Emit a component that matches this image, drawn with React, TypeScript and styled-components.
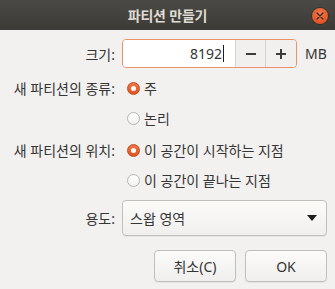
import styled, { createGlobalStyle } from 'styled-components';

const GlobalStyle = createGlobalStyle`
  html, body {
    margin: 0;
    padding: 0;
    background: #f2f1f0;
  }
  body {
    font-family: 'Noto Sans', 'Noto Sans CJK KR', sans-serif;
    font-size: 14px;
    color: #353535;
  }
`

type Option = { label: string; checked?: boolean };

const typeOptions: Option[] = [
  { label: '주', checked: true },
  { label: '논리' },
];

const placeOptions: Option[] = [
  { label: '이 공간이 시작하는 지점', checked: true },
  { label: '이 공간이 끝나는 지점' },
];

const App = () => {
  return (
    <Window>
      <GlobalStyle />
      <TitleBar>
        <Title>파티션 만들기</Title>
        <CloseButton aria-label='close'>
          <svg width='8' height='8' viewBox='0 0 8 8'>
            <path d='M1 1 L7 7 M7 1 L1 7' stroke='#3c2a22' strokeWidth='1.3' strokeLinecap='round' />
          </svg>
        </CloseButton>
      </TitleBar>

      <Form>
        <Label>크기:</Label>
        <SizeRow>
          <SpinEntry>
            <SpinValue>
              8192<Caret />
            </SpinValue>
            <SpinButton aria-label='minus'>
              <svg width='12' height='12' viewBox='0 0 12 12'>
                <path d='M1 6 H11' stroke='#3c3c3c' strokeWidth='2' />
              </svg>
            </SpinButton>
            <SpinButton aria-label='plus'>
              <svg width='12' height='12' viewBox='0 0 12 12'>
                <path d='M1 6 H11 M6 1 V11' stroke='#3c3c3c' strokeWidth='2' />
              </svg>
            </SpinButton>
          </SpinEntry>
          <Unit>MB</Unit>
        </SizeRow>

        <Label $gap={2}>새 파티션의 종류:</Label>
        <RadioItem option={typeOptions[0]} gap={2} />
        <span />
        <RadioItem option={typeOptions[1]} />

        <Label $gap={2}>새 파티션의 위치:</Label>
        <RadioItem option={placeOptions[0]} gap={2} />
        <span />
        <RadioItem option={placeOptions[1]} />

        <Label $gap={2}>용도:</Label>
        <Combo>
          <span>스왑 영역</span>
          <svg width='10' height='6' viewBox='0 0 10 6'>
            <path d='M0 0 H10 L5 6 Z' fill='#1e1e1e' />
          </svg>
        </Combo>
      </Form>

      <Footer>
        <Button>취소(C)</Button>
        <Button>OK</Button>
      </Footer>
    </Window>
  );
}

const RadioItem = ({ option, gap }: { option: Option; gap?: number }) => (
  <RadioRow $gap={gap}>
    <Radio $checked={option.checked} />
    <span>{option.label}</span>
  </RadioRow>
);

export default App;

const Window = styled.div`
  width: 335px;
  height: 289px;
  background: #f2f1f0;
  overflow: hidden;
`

const TitleBar = styled.div`
  height: 30px;
  position: relative;
  display: flex;
  align-items: center;
  justify-content: center;
  background: linear-gradient(#4b4a45, #3c3b37);
`

const Title = styled.div`
  color: #dfdbd2;
  font-weight: bold;
  font-size: 14px;
  letter-spacing: -0.2px;
`

const CloseButton = styled.div`
  position: absolute;
  right: 7px;
  top: 8px;
  width: 16px;
  height: 16px;
  border-radius: 50%;
  background: radial-gradient(circle at 50% 35%, #f27a4c, #e45526 70%, #c9461c);
  box-shadow: 0 0 0 1px rgba(0, 0, 0, 0.25);
  display: flex;
  align-items: center;
  justify-content: center;
`

const Form = styled.div`
  display: grid;
  grid-template-columns: 107px 1fr;
  column-gap: 7px;
  row-gap: 6px;
  padding: 9px 10px 0 8px;
  align-items: center;
`

const Label = styled.div<{ $gap?: number }>`
  text-align: right;
  white-space: nowrap;
  margin-top: ${p => p.$gap ?? 0}px;
`

const SizeRow = styled.div`
  display: flex;
  align-items: center;
  gap: 8px;
`

const SpinEntry = styled.div`
  width: 173px;
  height: 27px;
  display: flex;
  border: 1px solid #e9926c;
  border-radius: 4px;
  overflow: hidden;
  box-shadow: inset 0 0 0 1px rgba(233, 146, 108, 0.25);
`

const SpinValue = styled.div`
  flex: 1;
  display: flex;
  align-items: center;
  justify-content: flex-end;
  padding-right: 11px;
  background: #ffffff;
  font-size: 14px;
`

const Caret = styled.span`
  display: inline-block;
  width: 1px;
  height: 17px;
  background: #1e1e1e;
  margin-left: 1px;
`

const SpinButton = styled.div`
  width: 29px;
  display: flex;
  align-items: center;
  justify-content: center;
  background: #f1f0ee;
  border-left: 1px solid #d6d3cf;

  &:last-child {
    width: 30px;
  }
`

const Unit = styled.span`
  font-size: 14px;
`

const RadioRow = styled.div<{ $gap?: number }>`
  height: 24px;
  display: flex;
  align-items: center;
  gap: 4px;
  padding-left: 5px;
  margin-top: ${p => p.$gap ?? 0}px;
  white-space: nowrap;
`

const Radio = styled.span<{ $checked?: boolean }>`
  box-sizing: border-box;
  width: 13px;
  height: 13px;
  border-radius: 50%;
  flex-shrink: 0;
  position: relative;
  border: 1px solid ${p => (p.$checked ? '#c44a1d' : '#b8b5b0')};
  background: ${p => (p.$checked ? 'linear-gradient(#f07746, #e0521f)' : 'linear-gradient(#ffffff, #f3f2f1)')};

  &::after {
    content: '';
    display: ${p => (p.$checked ? 'block' : 'none')};
    position: absolute;
    left: 50%;
    top: 50%;
    width: 5px;
    height: 5px;
    margin: -2.5px 0 0 -2.5px;
    border-radius: 50%;
    background: #ffffff;
  }
`

const Combo = styled.div`
  box-sizing: border-box;
  height: 36px;
  margin-top: 2px;
  display: flex;
  align-items: center;
  justify-content: space-between;
  padding: 0 9px 0 7px;
  border: 1px solid #c2bfba;
  border-radius: 4px;
  background: linear-gradient(#fbfbfa, #f0efee);
  box-shadow: 0 1px 0 rgba(0, 0, 0, 0.05);
`

const Footer = styled.div`
  display: flex;
  justify-content: flex-end;
  gap: 9px;
  padding: 14px 8px 0 0;
`

const Button = styled.div`
  box-sizing: border-box;
  width: 82px;
  height: 32px;
  display: flex;
  align-items: center;
  justify-content: center;
  border: 1px solid #c2bfba;
  border-radius: 4px;
  background: linear-gradient(#fbfbfa, #f0efee);
  box-shadow: 0 1px 0 rgba(0, 0, 0, 0.05);
  font-size: 14px;
`
